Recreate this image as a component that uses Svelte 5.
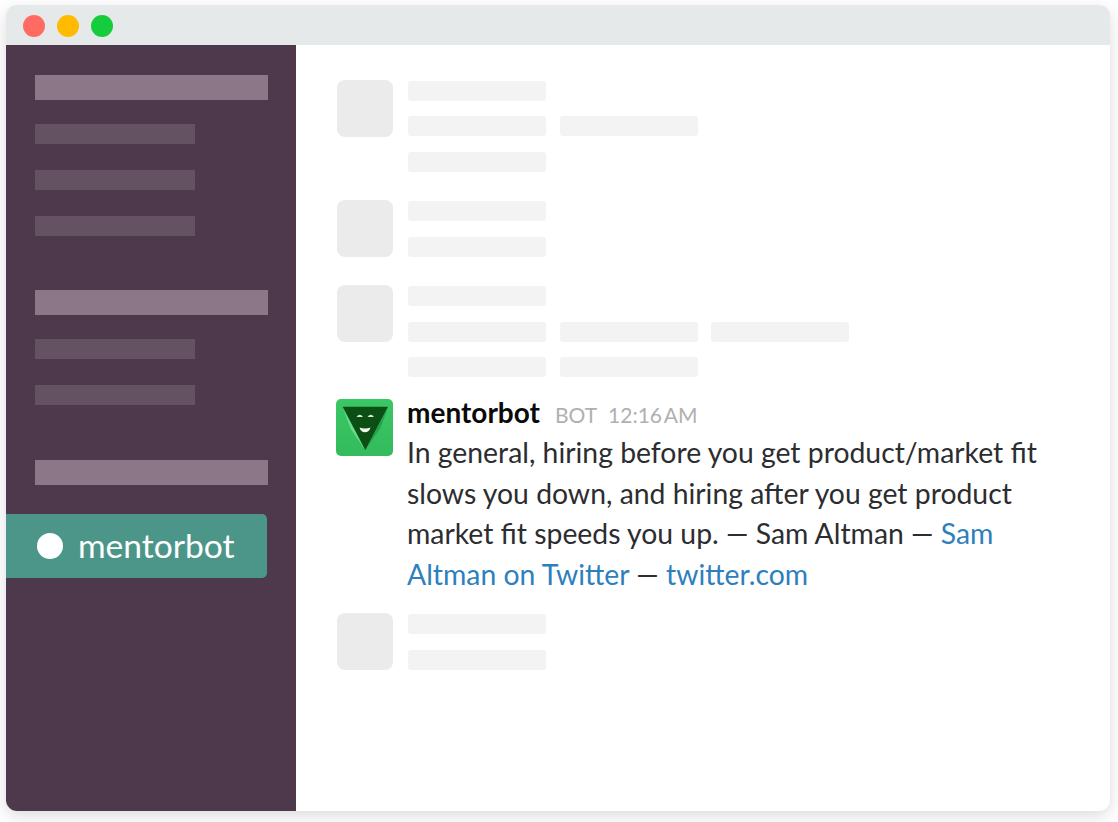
<script>
  const topGroups = [
    { head: true, items: 3 },
    { head: true, items: 2 },
    { head: true, items: 0 }
  ];

  // each row is a list of line widths
  const before = [
    { rows: [[138], [138, 138], [138]], cls: 'm1' },
    { rows: [[138], [138]], cls: 'm2' },
    { rows: [[138], [138, 138, 138], [138, 138]], cls: 'm3' }
  ];
</script>

<div class="page">
  <div class="window">
    <header class="titlebar">
      <span class="light red"></span>
      <span class="light yellow"></span>
      <span class="light green"></span>
    </header>
    <div class="body">
      <aside class="sidebar">
        {#each topGroups as g}
          <div class="group">
            <div class="bar head"></div>
            {#each Array(g.items) as _}
              <div class="bar item"></div>
            {/each}
          </div>
        {/each}
        <div class="active">
          <span class="dot"></span>
          <span class="active-name">mentorbot</span>
        </div>
      </aside>

      <main class="main">
        {#each before as msg}
          <div class="message {msg.cls}">
            <div class="avatar"></div>
            <div class="lines">
              {#each msg.rows as row}
                <div class="row">
                  {#each row as w}
                    <div class="line" style="width: {w}px"></div>
                  {/each}
                </div>
              {/each}
            </div>
          </div>
        {/each}

        <div class="message bot">
          <svg class="bot-avatar" viewBox="0 0 57 57" aria-hidden="true">
            <defs>
              <linearGradient id="botBg" x1="0" y1="0" x2="0" y2="1">
                <stop offset="0" stop-color="#3bc766" />
                <stop offset="1" stop-color="#33bb5c" />
              </linearGradient>
            </defs>
            <rect width="57" height="57" rx="5" fill="url(#botBg)" />
            <!-- side facets of the triangle -->
            <path d="M7 9 L14.500 29.500 L29.300 51 Z" fill="#6bdc8c" />
            <path d="M52 9 L44 29.500 L29.300 51 Z" fill="#25a149" />
            <path d="M6.700 7.700 H52 L29.300 51 Z" fill="#0c4f14" />
            <!-- eyes and smile -->
            <path d="M20.500 18 Q23.800 13.300 27 18 Z" fill="#d6ead6" />
            <path d="M31.500 18 Q34.700 13.300 38 18 Z" fill="#d6ead6" />
            <path d="M23.500 28.500 Q29 30.300 34.500 28.500 Q33.200 33.300 29 33.300 Q24.800 33.300 23.500 28.500 Z" fill="#f2f8ee" />
          </svg>
          <div class="content">
            <div class="meta">
              <span class="name">mentorbot</span>
              <span class="tag">BOT</span>
              <span class="time">12:16 AM</span>
            </div>
            <p class="text">In general, hiring before you get product/market fit<br />slows you down, and hiring after you get product<br />market fit speeds you up. — Sam Altman — <a href="#a">Sam<br />Altman on Twitter</a> — <a href="#b">twitter.com</a></p>
          </div>
        </div>

        <div class="message m5">
          <div class="avatar"></div>
          <div class="lines">
            <div class="row"><div class="line" style="width: 138px"></div></div>
            <div class="row"><div class="line" style="width: 138px"></div></div>
          </div>
        </div>
      </main>
    </div>
  </div>
</div>

<style>
  :global(body) {
    margin: 0;
    background: #fff;
  }

  .page {
    width: 1118px;
    height: 822px;
    box-sizing: border-box;
    padding: 5px 8px 11px 6px;
    overflow: hidden;
    font-family: Lato, "Open Sans", sans-serif;
  }

  .window {
    height: 100%;
    display: flex;
    flex-direction: column;
    border-radius: 11px;
    overflow: hidden;
    box-shadow: 0 5px 16px rgba(0, 0, 0, 0.14);
    background: #fff;
  }

  .titlebar {
    height: 40px;
    flex: none;
    display: flex;
    align-items: center;
    gap: 12px;
    padding: 2px 0 0 17px;
    box-sizing: border-box;
    background: #e5e9e9;
  }

  .light {
    width: 22px;
    height: 22px;
    border-radius: 50%;
  }
  .red { background: #ff6b63; }
  .yellow { background: #ffbb00; }
  .green { background: #14cc3c; }

  .body {
    flex: 1;
    display: flex;
    min-height: 0;
  }

  .sidebar {
    width: 290px;
    flex: none;
    background: #4d394b;
    padding-top: 30px;
    box-sizing: border-box;
  }

  .group {
    display: flex;
    flex-direction: column;
    align-items: flex-start;
    gap: 26px;
    padding-left: 29px;
    margin-bottom: 54px;
  }

  .group:nth-child(2) {
    margin-bottom: 55px;
  }

  .group:nth-child(3) {
    margin-bottom: 31px;
  }

  .bar { background: #8b7788; }
  .head {
    width: 233px;
    height: 25px;
    margin-bottom: -2px;
  }
  .item {
    width: 160px;
    height: 20px;
    background: #645161;
  }

  .active {
    width: 261px;
    height: 64px;
    display: flex;
    align-items: center;
    gap: 15px;
    padding-left: 31px;
    box-sizing: border-box;
    background: #4c9689;
    border-radius: 0 5px 5px 0;
    color: #fff;
  }

  .dot {
    width: 26px;
    height: 26px;
    border-radius: 50%;
    background: #fff;
  }

  .active-name {
    font-size: 33.600px;
    line-height: 1;
  }

  .main {
    flex: 1;
    padding: 34.500px 0 0 41px;
    box-sizing: border-box;
  }

  .message {
    display: flex;
    gap: 15px;
  }

  .avatar {
    width: 56px;
    height: 57px;
    flex: none;
    border-radius: 8px;
    background: #ebebeb;
  }

  .lines {
    display: flex;
    flex-direction: column;
    gap: 15.500px;
    padding-top: 1px;
  }

  .row {
    display: flex;
    gap: 13.500px;
  }

  .line {
    height: 20px;
    border-radius: 3px;
    background: #f3f3f3;
  }

  .m2 { margin-top: 28.500px; }
  .m3 { margin-top: 28px; }
  .m5 { margin-top: 19px; }

  .bot {
    margin-top: 22px;
    margin-left: -1px;
    gap: 14px;
  }

  .bot-avatar {
    width: 57px;
    height: 57px;
    flex: none;
    display: block;
  }

  .content {
    margin-top: -3px;
  }

  .meta {
    display: flex;
    align-items: baseline;
    gap: 15px;
    line-height: 32px;
  }

  .name {
    font-size: 28px;
    font-weight: 700;
    color: #0a0a0a;
  }

  .tag, .time {
    font-size: 21px;
    color: #b0b0b0;
  }

  .tag { margin-right: -4px; }
  .time { word-spacing: -3px; }

  .text {
    margin: 1px 0 0;
    font-size: 28.350px;
    line-height: 40.500px;
    color: #2c2d30;
    white-space: nowrap;
  }

  .text a {
    color: #2e80bd;
    text-decoration: none;
  }
</style>
